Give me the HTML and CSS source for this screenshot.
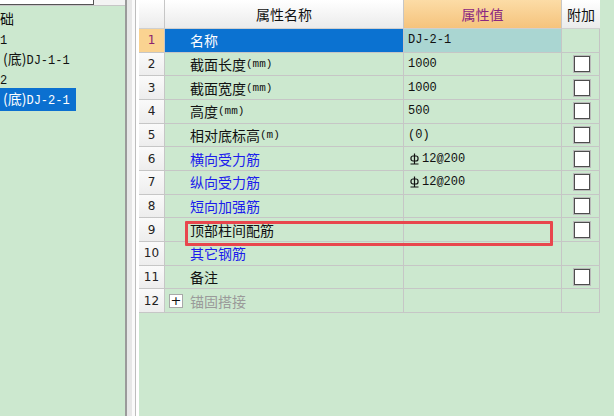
FILE: index.html
```html
<!DOCTYPE html>
<html lang="zh-CN">
<head>
    <meta charset="UTF-8">
    <title>构件属性</title>
    <link rel="stylesheet" href="styles.css">
</head>
<body>
    <div class="app">
        <div class="tree">
            <div class="tree-top">
                <div class="search-box"></div>
            </div>
            <div class="tree-list">
                <div class="tree-item cut">础</div>
                <div class="tree-item num"><span class="mono">1</span></div>
                <div class="tree-item">(底)<span class="mono">DJ-1-1</span></div>
                <div class="tree-item num"><span class="mono">2</span></div>
                <div class="tree-item"><span class="picked">(底)<span class="mono">DJ-2-1</span></span></div>
            </div>
        </div>
        <div class="split"></div>
        <div class="main">
            <div class="grid">
                <div class="cell rn head"></div>
                <div class="cell head center">属性名称</div>
                <div class="cell head val-head center">属性值</div>
                <div class="cell head center">附加</div>

                <div class="cell rn rn-active">1</div>
                <div class="cell name active">名称</div>
                <div class="cell val val-active"><span class="mono">DJ-2-1</span></div>
                <div class="cell add"></div>

                <div class="cell rn">2</div>
                <div class="cell name">截面长度<span class="unit">(mm)</span></div>
                <div class="cell val"><span class="mono">1000</span></div>
                <div class="cell add"><span class="check"></span></div>

                <div class="cell rn">3</div>
                <div class="cell name">截面宽度<span class="unit">(mm)</span></div>
                <div class="cell val"><span class="mono">1000</span></div>
                <div class="cell add"><span class="check"></span></div>

                <div class="cell rn">4</div>
                <div class="cell name">高度<span class="unit">(mm)</span></div>
                <div class="cell val"><span class="mono">500</span></div>
                <div class="cell add"><span class="check"></span></div>

                <div class="cell rn">5</div>
                <div class="cell name">相对底标高<span class="unit">(m)</span></div>
                <div class="cell val"><span class="mono">(0)</span></div>
                <div class="cell add"><span class="check"></span></div>

                <div class="cell rn">6</div>
                <div class="cell name link">横向受力筋</div>
                <div class="cell val">
                    <svg class="bar-sym" width="9" height="12" viewBox="0 0 9 12"><path d="M4.5 0.5V11M0.5 11H8.5" stroke="#111" stroke-width="1.2" fill="none"/><rect x="1" y="3" width="7" height="5" rx="2" stroke="#111" stroke-width="1.2" fill="none"/></svg><span class="mono">12@200</span>
                </div>
                <div class="cell add"><span class="check"></span></div>

                <div class="cell rn">7</div>
                <div class="cell name link">纵向受力筋</div>
                <div class="cell val">
                    <svg class="bar-sym" width="9" height="12" viewBox="0 0 9 12"><path d="M4.5 0.5V11M0.5 11H8.5" stroke="#111" stroke-width="1.2" fill="none"/><rect x="1" y="3" width="7" height="5" rx="2" stroke="#111" stroke-width="1.2" fill="none"/></svg><span class="mono">12@200</span>
                </div>
                <div class="cell add"><span class="check"></span></div>

                <div class="cell rn">8</div>
                <div class="cell name link">短向加强筋</div>
                <div class="cell val"></div>
                <div class="cell add"><span class="check"></span></div>

                <div class="cell rn">9</div>
                <div class="cell name">顶部柱间配筋</div>
                <div class="cell val"></div>
                <div class="cell add"><span class="check"></span></div>

                <div class="cell rn">10</div>
                <div class="cell name link">其它钢筋</div>
                <div class="cell val"></div>
                <div class="cell add"></div>

                <div class="cell rn">11</div>
                <div class="cell name">备注</div>
                <div class="cell val"></div>
                <div class="cell add"><span class="check"></span></div>

                <div class="cell rn">12</div>
                <div class="cell name group"><span class="plus">+</span>锚固搭接</div>
                <div class="cell val"></div>
                <div class="cell add"></div>
            </div>
            <div class="mark"></div>
        </div>
    </div>
</body>
</html>
```

FILE: styles.css
```css
* {
    box-sizing: border-box;
    margin: 0;
    padding: 0;
}

body {
    width: 614px;
    height: 416px;
    overflow: hidden;
    background: #cce8cf;
    font-family: "Noto Sans CJK SC", "Liberation Sans", sans-serif;
    font-size: 14px;
    color: #111;
}

.app {
    display: flex;
    height: 416px;
}

.mono {
    font-family: "Liberation Mono", monospace;
    font-size: 12px;
}

/* left tree */
.tree {
    width: 127px;
    border-right: 2px solid #9a9a9a;
    display: flex;
    flex-direction: column;
}

.tree-top {
    height: 6px;
    background: #f3f3f3;
    border-bottom: 1px solid #c6c6c6;
}

.search-box {
    width: 94px;
    height: 5px;
    background: #fff;
    border-right: 1px solid #555;
    border-bottom: 1px solid #555;
}

.tree-list {
    padding-top: 2px;
}

.tree-item {
    height: 20px;
    line-height: 20px;
    padding-left: 3px;
    white-space: nowrap;
}

.tree-item.cut {
    padding-left: 0;
}

.tree-item.num {
    padding-left: 0;
}

.picked {
    display: inline-block;
    background: #0b70d0;
    color: #fff;
    margin-left: -3px;
    padding: 0 6px 0 3px;
}

/* splitter */
.split {
    width: 12px;
    background: linear-gradient(to right, #e7e7e7 0, #e7e7e7 5px, #fafafa 5px, #fafafa 8px, #bdbdbd 8px, #bdbdbd 9px, #fff 9px);
}

/* property grid */
.main {
    flex: 1;
    position: relative;
}

.grid {
    width: 461px;
    display: grid;
    grid-template-columns: 26px 239px 158px 38px;
    grid-template-rows: 29px repeat(12, 23.67px);
    border-right: 1px solid #c4c4c4;
}

.cell {
    border-right: 1px solid #c6c6c6;
    border-bottom: 1px solid #c6c6c6;
    display: flex;
    align-items: center;
    white-space: nowrap;
    overflow: hidden;
}

.cell.add {
    border-right: none;
    justify-content: center;
}

.cell.head {
    background: linear-gradient(#ffffff, #ebebeb);
    border-bottom: 1px solid #cfcfcf;
}

.cell.head:nth-child(4) {
    border-right: none;
}

.center {
    justify-content: center;
}

.val-head {
    background: linear-gradient(#fcdca6, #f5c37c) !important;
    color: #8b2780;
}

.rn {
    justify-content: center;
    background: linear-gradient(#fafafa, #ededed);
    font-family: "DejaVu Sans", sans-serif;
    font-size: 12px;
    color: #222;
}

.rn-active {
    background: #fad391;
    color: #8a1f70;
}

.name {
    padding-left: 25px;
}

.name.active {
    background: #0b72d1;
    color: #fff;
}

.name.link {
    color: #1c1ced;
}

.name.group {
    padding-left: 4px;
    color: #9a9a9a;
}

.plus {
    width: 14px;
    height: 14px;
    margin-right: 7px;
    background: #fff;
    border: 1px solid #a8a8a8;
    color: #111;
    font-family: "DejaVu Sans", sans-serif;
    font-size: 13px;
    line-height: 11px;
    text-align: center;
}

.unit {
    font-family: "Liberation Mono", monospace;
    font-size: 11px;
}

.val {
    padding-left: 4px;
}

.val-active {
    background: #aad6d2;
}

.bar-sym {
    margin: 0 3px 0 2px;
}

.check {
    width: 16px;
    height: 16px;
    margin-left: 1px;
    background: #fff;
    border: 1px solid #4d4d4d;
    box-shadow: 0 0 0 1px #b9b9b9;
}

/* red annotation box */
.mark {
    position: absolute;
    left: 46px;
    top: 221px;
    width: 368px;
    height: 25px;
    border: 3px solid #e8464d;
    border-radius: 1px;
}
```
